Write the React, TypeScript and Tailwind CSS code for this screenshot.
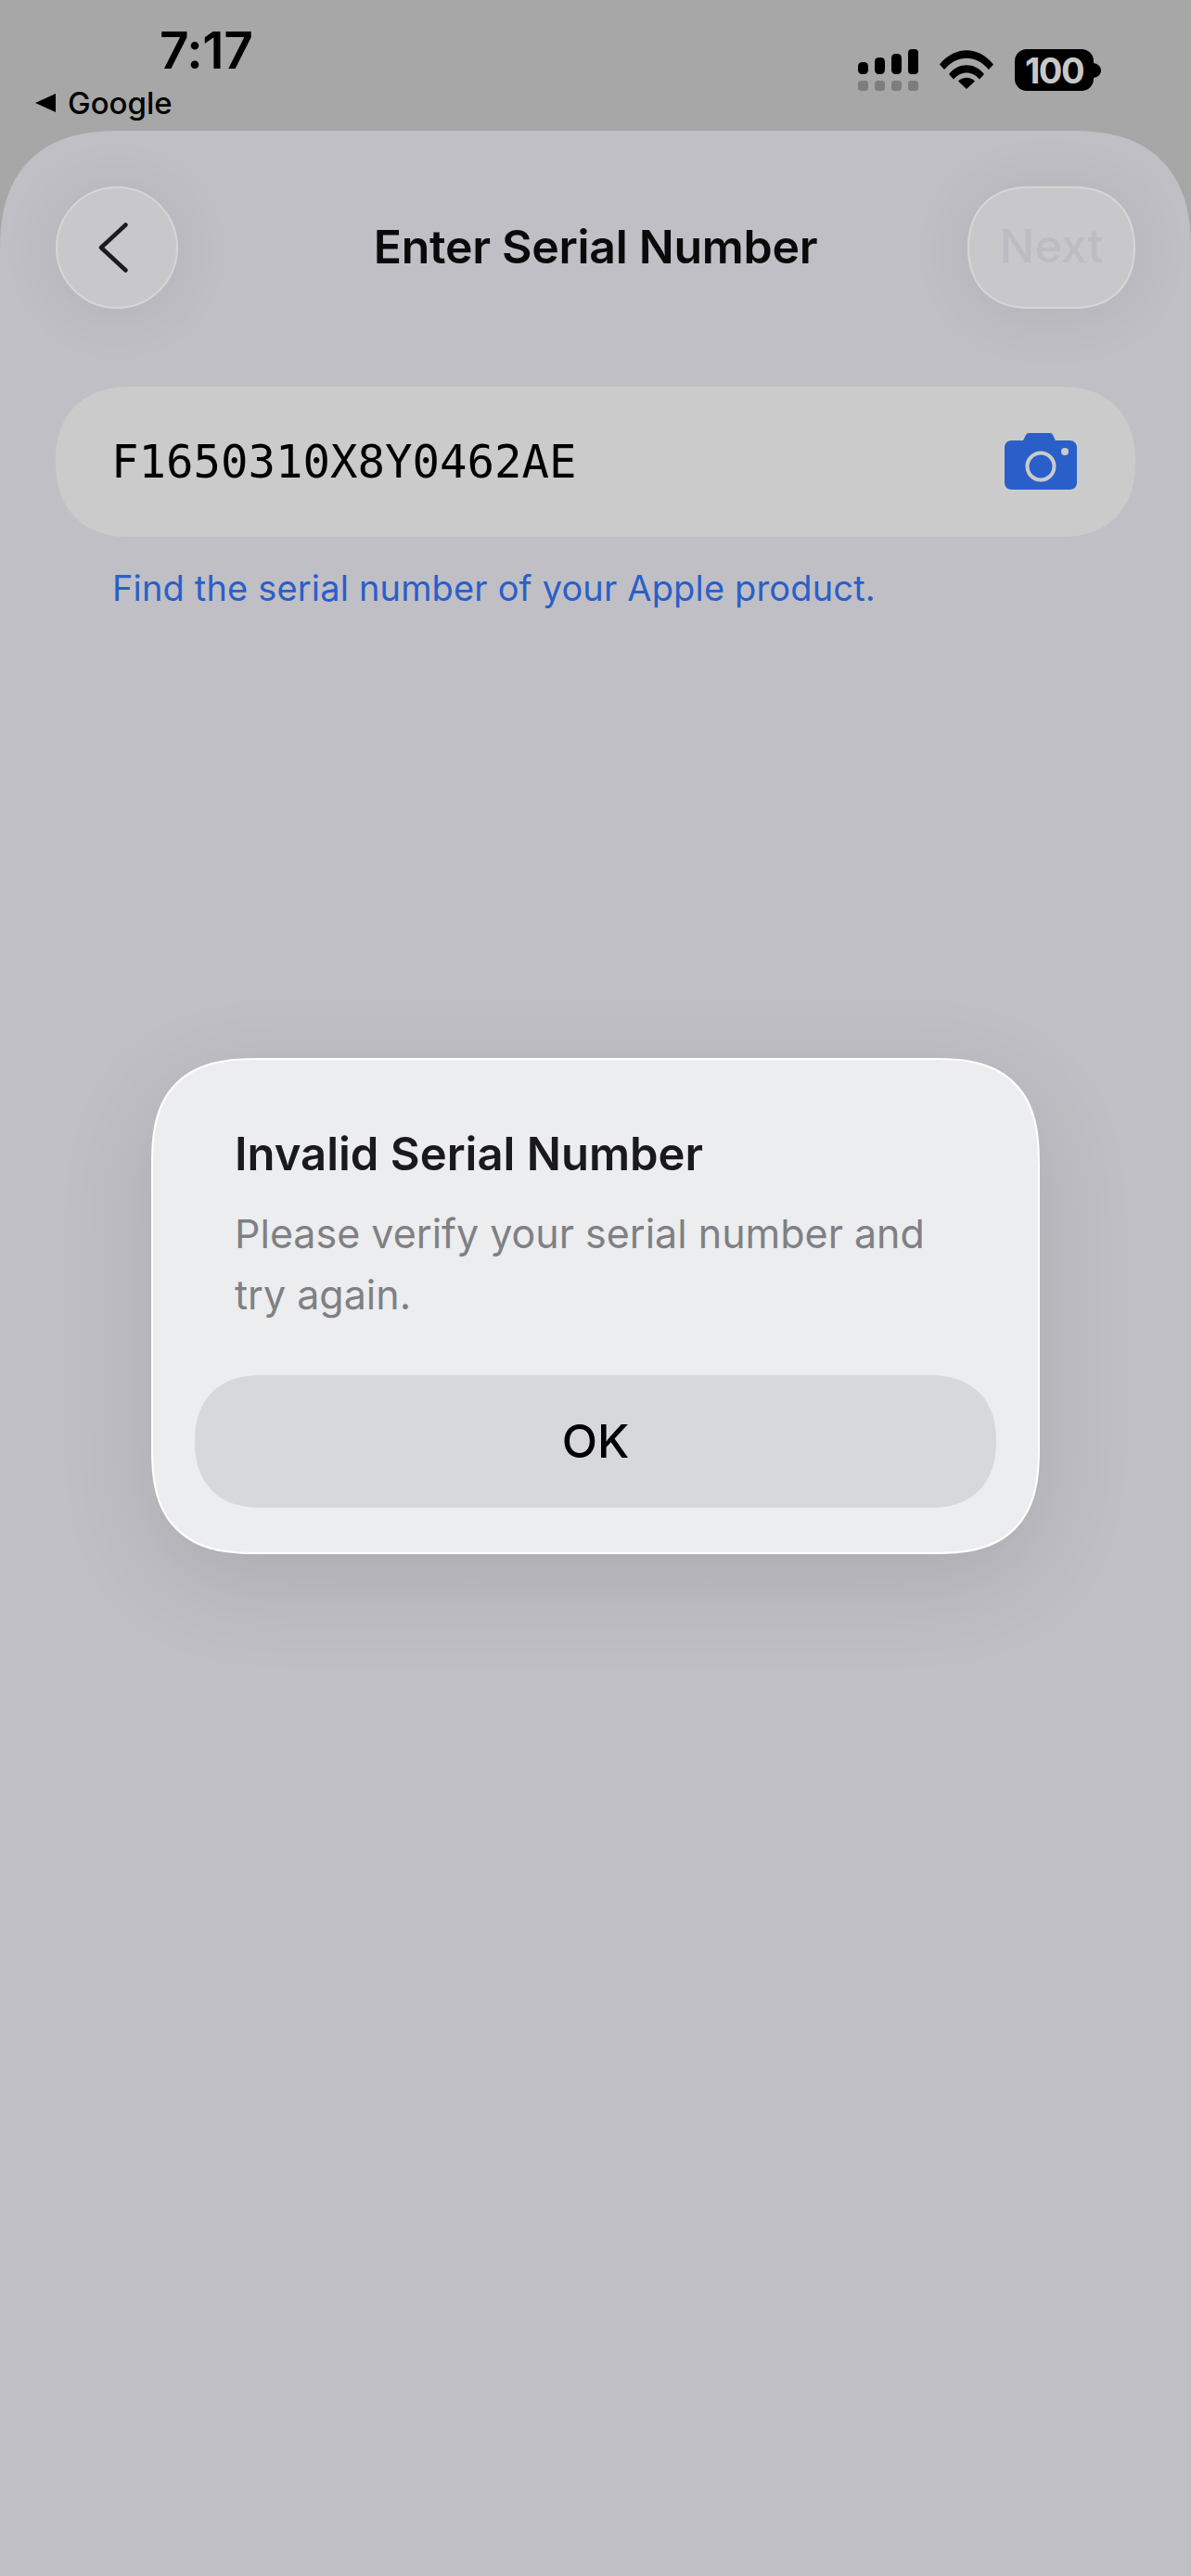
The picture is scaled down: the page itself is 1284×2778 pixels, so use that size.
import React from "react";

const StatusIcons: React.FC = () => (
  <div className="flex items-start gap-[23px] pt-[53px]">
    <svg width="65" height="45" viewBox="0 0 65 45">
      <rect x="0" y="14" width="11" height="13" rx="4.5" fill="#000" />
      <rect x="18" y="9" width="11" height="18" rx="4.5" fill="#000" />
      <rect x="36" y="5" width="11" height="22" rx="4.5" fill="#000" />
      <rect x="54" y="0" width="11" height="27" rx="4" fill="#000" />
      <rect x="0" y="34" width="11" height="11" rx="3.5" fill="#7d7d7d" />
      <rect x="18" y="34" width="11" height="11" rx="3.5" fill="#7d7d7d" />
      <rect x="36" y="34" width="11" height="11" rx="3.5" fill="#7d7d7d" />
      <rect x="54" y="34" width="11" height="11" rx="3.5" fill="#7d7d7d" />
    </svg>
    <svg width="58" height="42" viewBox="0 0 58 42" className="mt-px">
      <path d="M0 15.5 C16 -5 42 -5 58 15.5 L53 21 C39 4.5 19 4.5 5 21 Z" fill="#000" />
      <path d="M10 26 C20 13 38 13 48 26 L43 31.5 C35 22 23 22 15 31.5 Z" fill="#000" />
      <path d="M20 33.5 C25.500 28.500 32.500 28.500 38 33.500 L29 42 Z" fill="#000" />
    </svg>
    <div className="flex items-center">
      <div className="w-[85px] h-[45px] rounded-[13px] bg-black flex items-center justify-center text-[38px] font-bold tracking-[-1.5px] leading-none text-[#c8c8c8]">
        100
      </div>
      <svg width="8" height="16" viewBox="0 0 8 16">
        <path d="M0 0 C5 1 8 4 8 8 C8 12 5 15 0 16 Z" fill="#000" />
      </svg>
    </div>
  </div>
);

const CameraIcon: React.FC = () => (
  <svg width="78" height="61" viewBox="0 0 78 61" className="-mt-[2px]">
    <path
      d="M8 8 H20 L23 2 C23.600 0.700 25 0 26 0 H49 C50.500 0 51.500 0.700 52 2 L55 8 H70 C75 8 78 11 78 16 V53 C78 58 75 61 70 61 H8 C3 61 0 58 0 53 V16 C0 11 3 8 8 8 Z"
      fill="#2a5fc9"
    />
    <circle cx="39" cy="36" r="14.500" fill="none" stroke="#cbcbcb" strokeWidth="4" />
    <circle cx="65" cy="20" r="4" fill="#cbcbcb" />
  </svg>
);

const App: React.FC = () => {
  return (
    <div className="relative w-[1284px] h-[2778px] overflow-hidden bg-gradient-to-b from-[#a7a7a7] to-[#a1a1a1] font-['Inter',sans-serif] text-black">
      {/* status bar */}
      <div className="h-[141px] flex justify-between pl-[38px] pr-[97px]">
        <div className="flex flex-col">
          <div className="pl-[134px] pt-[24px] text-[55px] leading-[60px] font-semibold tracking-[-0.5px]">7:17</div>
          <div className="flex items-center gap-[13px] mt-[7px]">
            <svg width="22" height="20" viewBox="0 0 22 20">
              <path d="M22 0 V20 L0 10 Z" fill="#000" />
            </svg>
            <span className="text-[33px] leading-[40px] font-medium">Google</span>
          </div>
        </div>
        <StatusIcons />
      </div>

      {/* sheet */}
      <div className="h-[2637px] rounded-t-[130px] [corner-shape:superellipse(1.3)] bg-[#c0bfc5] px-[60px] pt-[60px]">
        <div className="grid grid-cols-[181px_1fr_181px] items-center">
          <button className="w-[132px] h-[132px] rounded-full bg-[#c8c8cb] border-2 border-[#d6d6d9] shadow-[0_4px_70px_rgba(0,0,0,0.08)] flex items-center justify-center">
            <svg width="32" height="54" viewBox="0 0 32 54" className="-ml-[9px]">
              <path d="M29.500 2.500 L3 27 L29.500 51.500" fill="none" stroke="#1c1c1e" strokeWidth="4.500" strokeLinecap="round" strokeLinejoin="round" />
            </svg>
          </button>
          <h1 className="text-center text-[50px] font-semibold leading-[60px] tracking-[-0.3px] -mt-[3px] text-[#0a0a0a]">Enter Serial Number</h1>
          <button className="w-[181px] h-[132px] rounded-[66px] [corner-shape:superellipse(1.15)] bg-[#c8c8cb] border-2 border-[#d6d6d9] shadow-[0_4px_70px_rgba(0,0,0,0.08)] text-[50px] font-medium text-[#bcbcc2]">
            <span className="relative -top-[2px]">Next</span>
          </button>
        </div>

        <div className="mt-[84px] h-[162px] rounded-[81px] [corner-shape:superellipse(1.2)] bg-[#cbcbcb] pl-[60px] pr-[63px] flex items-center justify-between">
          <span className="font-['DejaVu_Sans_Mono',monospace] text-[49px] leading-none">F1650310X8Y0462AE</span>
          <CameraIcon />
        </div>

        <p className="mt-[32px] pl-[61px] text-[38px] leading-[48px] tracking-[0.16px] -translate-y-[1px] text-[#2a5fc9]">Find the serial number of your Apple product.</p>
      </div>

      {/* alert dialog */}
      <div className="absolute top-[1141px] left-[163px] w-[958px] h-[535px] rounded-[115px] [corner-shape:superellipse(1.4)] bg-[#ecedef] border-2 border-white shadow-[0_30px_110px_rgba(0,0,0,0.11)] pt-[72px] flex flex-col">
        <h2 className="px-[88px] text-[49px] font-semibold leading-[60px] tracking-[0px] text-[#1a1a1c]">Invalid Serial Number</h2>
        <p className="px-[88px] mt-[22px] text-[43px] leading-[66px] text-[#808084]">Please verify your serial number and try again.</p>
        <button className="mt-[54px] mx-[45px] h-[143px] rounded-[72px] [corner-shape:superellipse(1.2)] bg-[#d7d8dc] text-[50px] font-medium text-black">OK</button>
      </div>
    </div>
  );
};

export default App;
